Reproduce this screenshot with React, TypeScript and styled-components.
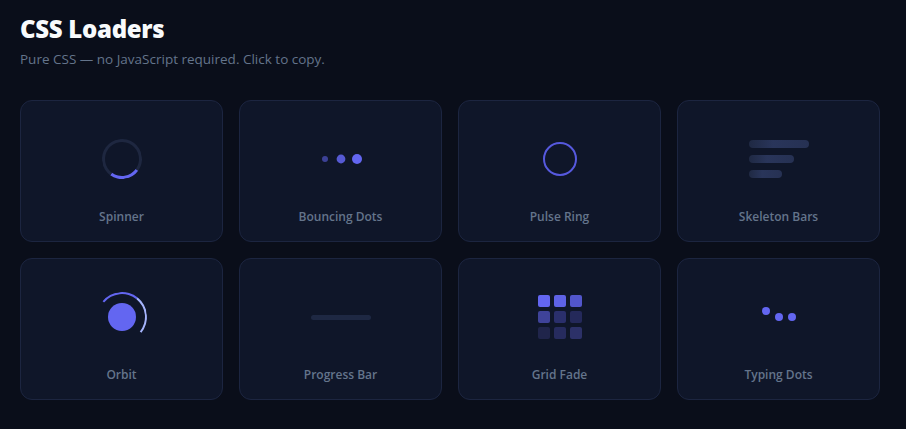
import React from "react";
import styled, { createGlobalStyle } from "styled-components";

const GlobalStyle = createGlobalStyle`
  * { box-sizing: border-box; }
  body {
    margin: 0;
    background: #0a0e1a;
    font-family: "Open Sans", "Noto Sans", sans-serif;
  }
`;

const Page = styled.main`
  padding: 13px 20px 20px;
  max-width: 900px;
`;

const Title = styled.h1`
  margin: 0;
  font-size: 24px;
  line-height: 32px;
  font-weight: 800;
  letter-spacing: -0.3px;
  color: #f8fafc;
`;

const Subtitle = styled.p`
  margin: 5px 0 0;
  font-size: 13.5px;
  line-height: 18px;
  color: #64748b;
`;

const Grid = styled.section`
  margin-top: 32px;
  width: 860px;
  display: grid;
  grid-template-columns: repeat(4, 1fr);
  gap: 16px;
`;

const Card = styled.div`
  height: 142px;
  padding: 28px 16px 16px;
  display: flex;
  flex-direction: column;
  align-items: center;
  justify-content: flex-start;
  gap: 20px;
  background: #0f1629;
  border: 1px solid #1c2540;
  border-radius: 12px;
  cursor: pointer;
`;

const Stage = styled.div`
  height: 62px;
  width: 100%;
  display: flex;
  align-items: center;
  justify-content: center;
`;

const Label = styled.span`
  font-size: 12px;
  line-height: 16px;
  font-weight: 600;
  color: #64748b;
`;

/* ---- loaders ---- */

const Spinner = styled.div`
  width: 40px;
  height: 40px;
  border-radius: 50%;
  border: 3px solid #1e2740;
  border-bottom-color: #6366f1;
  transform: rotate(-9deg);
`;

const DotRow = styled.div<{ $gap: number }>`
  display: flex;
  align-items: center;
  gap: ${(p) => p.$gap}px;
`;

const Dot = styled.span<{ $size: number; $scale?: number; $opacity?: number; $lift?: number }>`
  width: ${(p) => p.$size}px;
  height: ${(p) => p.$size}px;
  border-radius: 50%;
  background: #6366f1;
  opacity: ${(p) => p.$opacity ?? 1};
  transform: translateY(${(p) => -(p.$lift ?? 0)}px) scale(${(p) => p.$scale ?? 1});
`;

const Ring = styled.div`
  width: 34px;
  height: 34px;
  border-radius: 50%;
  border: 2px solid #5659de;
`;

const BarStack = styled.div`
  width: 60px;
  display: flex;
  flex-direction: column;
  gap: 7px;
`;

const SkeletonBar = styled.span<{ $w: number }>`
  width: ${(p) => p.$w}px;
  height: 8px;
  border-radius: 4px;
  background: linear-gradient(90deg, #1f2943 0%, #29355a 40%, #263153 100%);
`;

const OrbitBox = styled.div`
  position: relative;
  width: 50px;
  height: 50px;
  display: flex;
  align-items: center;
  justify-content: center;
`;

const OrbitPath = styled.span`
  position: absolute;
  inset: 0;
  border-radius: 50%;
  border: 2px solid transparent;
  border-top-color: #6366f1;
  border-right-color: #a5b4fc;
  transform: rotate(-6deg);
`;

const OrbitCore = styled.span`
  width: 28px;
  height: 28px;
  border-radius: 50%;
  background: #6366f1;
`;

const Track = styled.div`
  width: 60px;
  height: 5px;
  border-radius: 3px;
  background: #1e2843;
`;

const Tiles = styled.div`
  display: grid;
  grid-template-columns: repeat(3, 12px);
  gap: 4px;
`;

const Tile = styled.span<{ $c: string }>`
  height: 12px;
  border-radius: 2px;
  background: ${(p) => p.$c};
`;

const tileColors = [
  "#6366f1", "#5e62e6", "#5256cb",
  "#3f4399", "#2a2f6b", "#24295a",
  "#20254b", "#262b5e", "#2c3168",
];

const loaders: { name: string; view: React.ReactNode }[] = [
  { name: "Spinner", view: <Spinner /> },
  {
    name: "Bouncing Dots",
    view: (
      <DotRow $gap={6}>
        <Dot $size={10} $scale={0.6} $opacity={0.55} />
        <Dot $size={10} $scale={0.88} $opacity={0.85} />
        <Dot $size={10} />
      </DotRow>
    ),
  },
  { name: "Pulse Ring", view: <Ring /> },
  {
    name: "Skeleton Bars",
    view: (
      <BarStack>
        <SkeletonBar $w={60} />
        <SkeletonBar $w={45} />
        <SkeletonBar $w={33} />
      </BarStack>
    ),
  },
  {
    name: "Orbit",
    view: (
      <OrbitBox>
        <OrbitPath />
        <OrbitCore />
      </OrbitBox>
    ),
  },
  { name: "Progress Bar", view: <Track /> },
  {
    name: "Grid Fade",
    view: (
      <Tiles>
        {tileColors.map((c, i) => (
          <Tile key={i} $c={c} />
        ))}
      </Tiles>
    ),
  },
  {
    name: "Typing Dots",
    view: (
      <DotRow $gap={5}>
        <Dot $size={8} $lift={6} />
        <Dot $size={8} />
        <Dot $size={8} />
      </DotRow>
    ),
  },
];

export default function App() {
  return (
    <>
      <GlobalStyle />
      <Page>
        <Title>CSS Loaders</Title>
        <Subtitle>Pure CSS — no JavaScript required. Click to copy.</Subtitle>
        <Grid>
          {loaders.map((l) => (
            <Card key={l.name} role="button" title="Click to copy">
              <Stage>{l.view}</Stage>
              <Label>{l.name}</Label>
            </Card>
          ))}
        </Grid>
      </Page>
    </>
  );
}
